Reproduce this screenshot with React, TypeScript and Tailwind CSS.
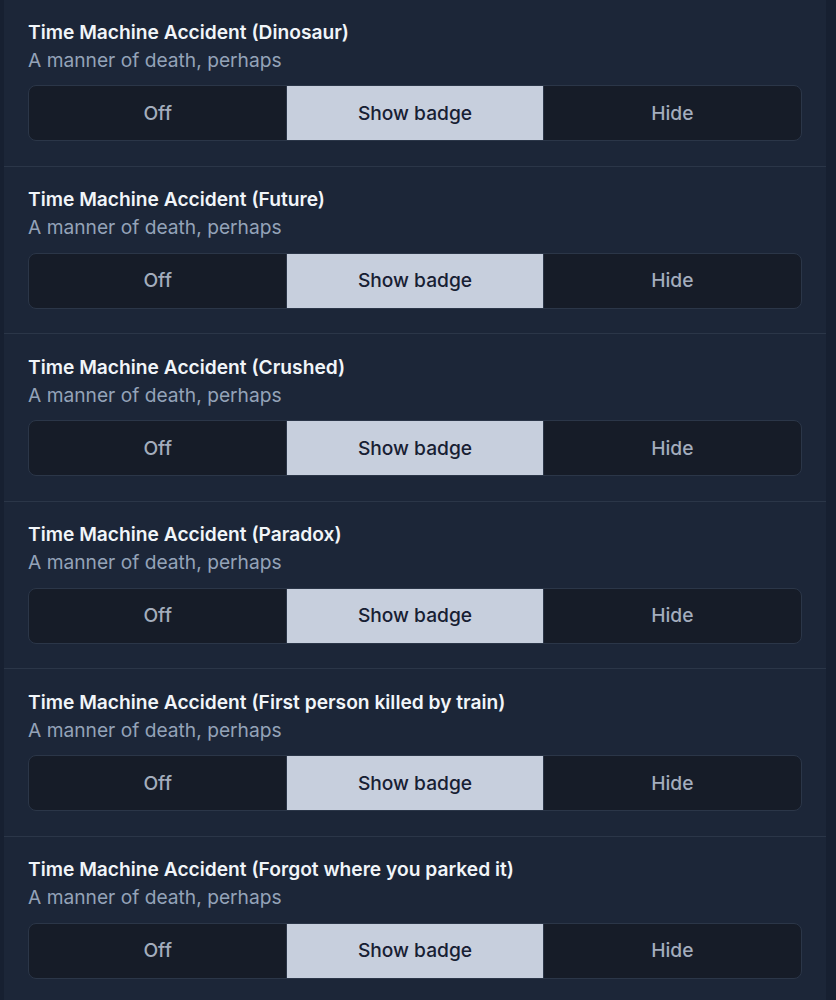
import { useState } from 'react';

const causes = [
  'Dinosaur',
  'Future',
  'Crushed',
  'Paradox',
  'First person killed by train',
  'Forgot where you parked it',
];

const options = ['Off', 'Show badge', 'Hide'];

function Setting({ label }: { label: string }) {
  const [value, setValue] = useState('Show badge');
  return (
    <div className="border-b border-[#2b3648] px-6 pt-[18.5px] pb-[24.5px]">
      <div className="text-[19.2px] leading-7 font-semibold text-[#f1f5f9]">
        Time Machine Accident ({label})
      </div>
      <div className="text-[19.2px] leading-7 text-[#94a3b8]">A manner of death, perhaps</div>
      <div className="mt-[11.5px] grid h-14 grid-cols-3 overflow-hidden rounded-lg border border-[#2b3648] bg-[#161c28]">
        {options.map((o) => (
          <button
            key={o}
            onClick={() => setValue(o)}
            className={
              value === o
                ? 'border-x border-[#2b3648] bg-[#c7cfdd] text-[19.2px] font-medium text-[#172033]'
                : 'text-[19.2px] font-medium text-[#a3adbd]'
            }
          >
            {o}
          </button>
        ))}
      </div>
    </div>
  );
}

export default function App() {
  return (
    <div
      className="min-h-screen bg-[#172031] pl-1 pr-[10px]"
      style={{ fontFamily: 'Inter, "Noto Sans", sans-serif' }}
    >
      <div className="-mt-px bg-[#1c2638]">
        {causes.map((c) => (
          <Setting key={c} label={c} />
        ))}
      </div>
    </div>
  );
}
